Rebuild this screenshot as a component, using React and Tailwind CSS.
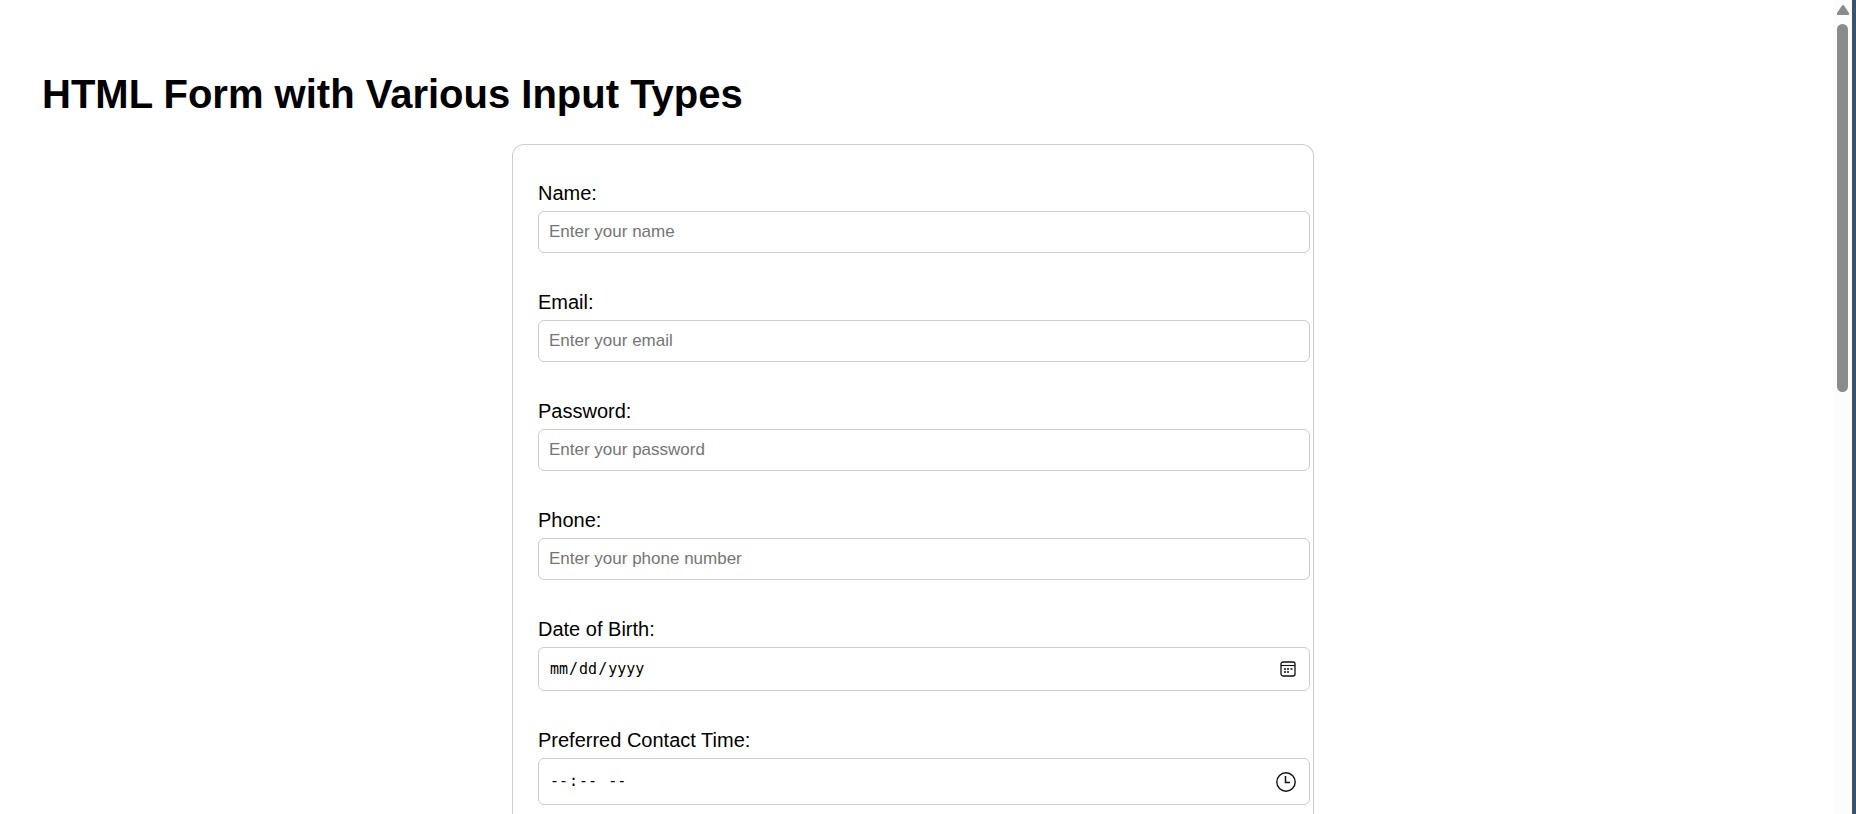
import React from "react";

function CalendarIcon() {
  return (
    <svg viewBox="0 0 16 16" className="h-4 w-4" fill="none" stroke="#111" aria-hidden="true">
      <rect x="1" y="1" width="14" height="14" rx="2" strokeWidth="1.3" />
      <path d="M1 4.5h14" strokeWidth="1.1" />
      <path d="M4 8h2M7 8h2M10.500 8h2M4 11h2M7 11h2" strokeWidth="1.7" />
    </svg>
  );
}

function ClockIcon() {
  return (
    <svg viewBox="0 0 20 20" className="h-5 w-5" fill="none" stroke="#111" aria-hidden="true">
      <circle cx="10" cy="10" r="9.2" strokeWidth="1.4" />
      <path d="M9.500 4v6.500h4.500" strokeWidth="1.5" />
    </svg>
  );
}

const fields = [
  { id: "name", label: "Name:", type: "text", placeholder: "Enter your name" },
  { id: "email", label: "Email:", type: "email", placeholder: "Enter your email" },
  { id: "password", label: "Password:", type: "password", placeholder: "Enter your password" },
  { id: "phone", label: "Phone:", type: "tel", placeholder: "Enter your phone number" },
];

const inputBase = "box-border block w-full rounded-md border border-[#ccc] bg-white px-[10px] outline-none";
const pickerBase =
  " font-['DejaVu_Sans_Mono',monospace] text-[15px] text-black [&::-webkit-calendar-picker-indicator]:opacity-0";

function Field({ id, label, children }) {
  return (
    <div className="-mr-[22px] flex flex-col gap-[6px]">
      <label htmlFor={id} className="text-xl leading-[23px]">{label}</label>
      {children}
    </div>
  );
}

function PickerField({ id, label, type, height, icon }) {
  return (
    <Field id={id} label={label}>
      <div className="relative">
        <input id={id} type={type} className={inputBase + pickerBase + " " + height} />
        <span className="pointer-events-none absolute inset-y-0 right-[14px] flex items-center">{icon}</span>
      </div>
    </Field>
  );
}

export default function App() {
  return (
    <div className="flex h-screen overflow-hidden bg-white font-['Liberation_Sans',Arial,sans-serif] text-black">
      <main className="flex min-w-0 flex-1 flex-col pl-[42px] pr-[49px] pt-[71px]">
        <h1 className="mb-[27px] text-[40px] leading-[46px] font-bold">HTML Form with Various Input Types</h1>
        <form className="mx-auto flex w-full max-w-[802px] flex-1 flex-col gap-[38px] rounded-t-xl border border-b-0 border-[#ccc] px-[25px] pt-[37px]">
          {fields.map((f) => (
            <Field key={f.id} id={f.id} label={f.label}>
              <input
                id={f.id}
                type={f.type}
                placeholder={f.placeholder}
                className={inputBase + " h-[42px] text-[17px] placeholder:text-[#757575]"}
              />
            </Field>
          ))}
          <PickerField id="dob" label="Date of Birth:" type="date" height="h-[44px]" icon={<CalendarIcon />} />
          <PickerField id="time" label="Preferred Contact Time:" type="time" height="h-[47px]" icon={<ClockIcon />} />
        </form>
      </main>
      <div className="flex w-[19px] shrink-0 flex-col items-center bg-[#fcfcfc] pt-[5px]" aria-hidden="true">
        <svg viewBox="0 0 14 10" className="h-[10px] w-[14px]" fill="#8b8b8b">
          <path d="M6 .6Q7-.4 8 .6L13 8Q13.500 10 12 10H2Q.5 10 1 8Z" />
        </svg>
        <div className="mt-[9px] h-[45.5%] w-[11px] rounded-full bg-[#8b8b8b]" />
      </div>
      <div className="w-1 shrink-0 bg-[#3b5373]" />
    </div>
  );
}
